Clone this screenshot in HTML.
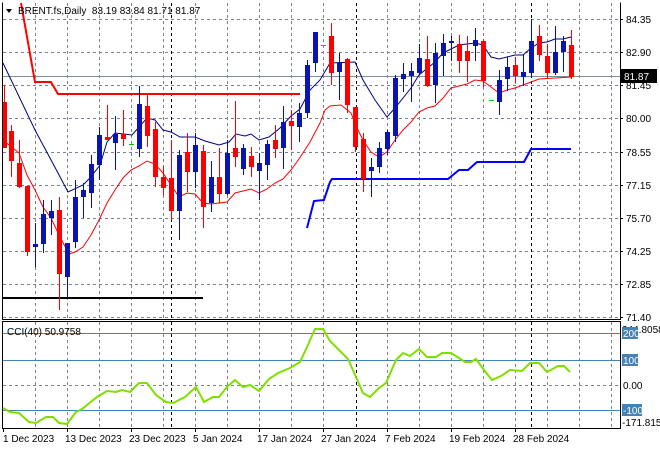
<!DOCTYPE html>
<html><head><meta charset="utf-8"><style>
html,body{margin:0;padding:0;background:#fff;}
svg{display:block;font-family:"Liberation Sans",sans-serif;}
</style></head><body>
<svg width="660" height="450" viewBox="0 0 660 450" xmlns="http://www.w3.org/2000/svg">
<rect width="660" height="450" fill="#fff"/>
<g stroke="#7a8290" stroke-width="1" stroke-dasharray="3,3" fill="none">
<path d="M3 19.5H620M3 52.5H620M3 85.5H620M3 118.5H620M3 152.5H620M3 185.5H620M3 218.5H620M3 251.5H620M3 284.5H620M3 317.5H620"/>
<path d="M35.5 3V319M67.5 3V319M99.5 3V319M131.5 3V319M163.5 3V319M195.5 3V319M227.5 3V319M259.5 3V319M291.5 3V319M323.5 3V319M387.5 3V319M419.5 3V319M451.5 3V319M483.5 3V319M515.5 3V319M547.5 3V319M579.5 3V319M611.5 3V319"/>
<path d="M35.5 322V428M67.5 322V428M99.5 322V428M131.5 322V428M163.5 322V428M195.5 322V428M227.5 322V428M259.5 322V428M291.5 322V428M323.5 322V428M387.5 322V428M419.5 322V428M451.5 322V428M483.5 322V428M515.5 322V428M547.5 322V428M579.5 322V428M611.5 322V428M3 385.5H620"/>
</g>
<g stroke="#000" stroke-width="1" stroke-dasharray="3,3">
<path d="M171.5 3V319M356.5 3V319M531.5 3V319M171.5 322V428M356.5 322V428M531.5 322V428"/>
</g>
<path d="M3 76.5H620" stroke="#7890a0" stroke-width="1"/>
<path d="M3 298H203" stroke="#000" stroke-width="2"/>
<polyline points="21,3 35,82 51,82 58,94 300,94" fill="none" stroke="#ff0000" stroke-width="2"/>
<polyline points="307,228 314,201 324,200 330,182 332,179 448,179 459,170 468,170 477,162 524,162 531,149 571,149" fill="none" stroke="#0000ff" stroke-width="2"/>
<polyline fill="none" stroke="#000080" stroke-width="1" points="3,63 35,130 58,173 68,192 83,185 90,178 100,165 107,142 115,133 132,135 147,118 155,120 163,130 171,132 180,137 195,137 205,141 219,145 229,142 236,134 245,136 251,134 259,140 269,137 280,128 291,116 300,109 310,90 320,80 330,63 355,62 363,80 375,100 387,117 395,108 411,88 419,75 435,62 443,53 459,45 475,43 483,45 491,57 499,59 515,55 523,55 531,48 539,43 547,42 555,39 563,39 571,37"/>
<polyline fill="none" stroke="#ff0000" stroke-width="1" points="3,140 19,153 27,175 35,190 43,207 51,218 59,235 69,254 75,252 83,247 91,235 99,220 107,203 115,190 123,178 131,170 139,166 147,161 155,164 163,173 171,185 179,197 187,193 195,194 203,203 211,204 227,202 235,193 243,191 251,189 259,193 267,189 275,183 283,179 291,170 299,159 310,142 320,123 325,110 330,106 341,105 351,113 357,128 363,140 371,152 379,157 387,152 395,140 403,130 411,122 419,112 427,108 435,106 443,98 451,88 459,86 467,84 475,80 483,81 491,87 499,93 507,90 515,88 523,85 531,82 539,79 555,78 571,77"/>
<path stroke="#ff0000" stroke-width="1" d="M4.5 85V148M11.5 125V177M19.5 140V188M27.5 186V256M59.5 197V310M107.5 105V140M123.5 110V146M147.5 95V147M155.5 122V187M163.5 166V195M171.5 140V220M187.5 133V192M203.5 145V228M219.5 148V203M235.5 101V167M251.5 147V177M275.5 125V158M291.5 110V150M331.5 23V85M347.5 58V113M355.5 107V152M363.5 133V192M427.5 36V87M459.5 35V73M467.5 36V82M483.5 39V87M515.5 57V83M539.5 25V61M547.5 44V79M571.5 30V79"/>
<g fill="#ff0000">
<rect x="2" y="102" width="5" height="46"/><rect x="9" y="131" width="5" height="30"/><rect x="17" y="163" width="5" height="24"/><rect x="25" y="186" width="5" height="66"/><rect x="57" y="210" width="5" height="64"/><rect x="105" y="137" width="5" height="3"/><rect x="121" y="134" width="5" height="5"/><rect x="145" y="106" width="5" height="30"/><rect x="153" y="129" width="5" height="48"/><rect x="161" y="177" width="5" height="11"/><rect x="169" y="178" width="5" height="33"/><rect x="185" y="152" width="5" height="20"/><rect x="201" y="151" width="5" height="56"/><rect x="217" y="177" width="5" height="17"/><rect x="233" y="148" width="5" height="9"/><rect x="249" y="156" width="5" height="11"/><rect x="273" y="140" width="5" height="9"/><rect x="289" y="121" width="5" height="5"/><rect x="329" y="36" width="5" height="37"/><rect x="345" y="59" width="5" height="46"/><rect x="353" y="107" width="5" height="40"/><rect x="361" y="139" width="5" height="40"/><rect x="425" y="59" width="5" height="27"/><rect x="457" y="44" width="5" height="17"/><rect x="465" y="51" width="5" height="10"/><rect x="481" y="41" width="5" height="40"/><rect x="513" y="65" width="5" height="11"/><rect x="537" y="36" width="5" height="19"/><rect x="545" y="56" width="5" height="17"/><rect x="569" y="45" width="5" height="32"/>
</g>
<path stroke="#0010c0" stroke-width="1" d="M35.5 223V267M43.5 200V253M51.5 200V235M67.5 243V298M75.5 180V248M83.5 183V218M91.5 155V208M99.5 127V180M115.5 116V170M139.5 86V157M179.5 150V240M195.5 133V188M211.5 161V212M227.5 140V195M243.5 144V175M259.5 153V200M267.5 140V180M283.5 106V169M299.5 103V142M307.5 60V118M315.5 32V72M339.5 53V100M371.5 158V197M379.5 142V173M387.5 130V155M395.5 75V142M403.5 63V92M411.5 63V102M419.5 44V75M435.5 43V103M443.5 34V76M451.5 36V61M475.5 28V61M499.5 70V115M507.5 57V91M523.5 54V86M531.5 19V77M555.5 26V75M563.5 36V72"/>
<g fill="#0a14b0">
<rect x="33" y="244" width="5" height="3"/><rect x="41" y="214" width="5" height="30"/><rect x="49" y="211" width="5" height="7"/><rect x="65" y="243" width="5" height="34"/><rect x="73" y="197" width="5" height="45"/><rect x="81" y="190" width="5" height="7"/><rect x="89" y="164" width="5" height="29"/><rect x="97" y="135" width="5" height="30"/><rect x="113" y="134" width="5" height="9"/><rect x="137" y="104" width="5" height="45"/><rect x="177" y="155" width="5" height="56"/><rect x="193" y="145" width="5" height="27"/><rect x="209" y="177" width="5" height="26"/><rect x="225" y="153" width="5" height="41"/><rect x="241" y="148" width="5" height="21"/><rect x="257" y="163" width="5" height="8"/><rect x="265" y="144" width="5" height="21"/><rect x="281" y="122" width="5" height="26"/><rect x="297" y="113" width="5" height="14"/><rect x="305" y="65" width="5" height="48"/><rect x="313" y="32" width="5" height="31"/><rect x="337" y="63" width="5" height="9"/><rect x="369" y="167" width="5" height="4"/><rect x="377" y="148" width="5" height="19"/><rect x="385" y="132" width="5" height="17"/><rect x="393" y="78" width="5" height="58"/><rect x="401" y="74" width="5" height="5"/><rect x="409" y="71" width="5" height="5"/><rect x="417" y="58" width="5" height="15"/><rect x="433" y="53" width="5" height="32"/><rect x="441" y="43" width="5" height="13"/><rect x="449" y="41" width="5" height="2"/><rect x="473" y="40" width="5" height="6"/><rect x="497" y="80" width="5" height="22"/><rect x="505" y="67" width="5" height="12"/><rect x="521" y="72" width="5" height="5"/><rect x="529" y="41" width="5" height="32"/><rect x="553" y="52" width="5" height="21"/><rect x="561" y="41" width="5" height="11"/>
</g>
<path stroke="#00cc00" stroke-width="1" d="M129 144.5H134M321 45.5H326M489 100.5H494"/>
<g fill="none" stroke="#000" stroke-width="1">
<path d="M2.5 2.5V319.5H620.5V2.5"/>
<path d="M2.5 321.5H620.5V428.5H2.5Z"/>
</g>
<path d="M6 9L12 9L9 13Z" fill="#000"/>
<text x="18" y="14" font-size="10" fill="#000">BRENT.fs,Daily&#160;&#160;83.19&#160;83.84&#160;81.71&#160;81.87</text>
<g font-size="10" fill="#000">
<text x="626" y="23">84.35</text><text x="626" y="56">82.90</text><text x="626" y="89">81.45</text><text x="626" y="122">80.00</text><text x="626" y="156">78.55</text><text x="626" y="189">77.15</text><text x="626" y="222">75.70</text><text x="626" y="255">74.25</text><text x="626" y="288">72.85</text><text x="626" y="321">71.40</text>
</g>
<path d="M620 19.5h3M620 52.5h3M620 85.5h3M620 118.5h3M620 152.5h3M620 185.5h3M620 218.5h3M620 251.5h3M620 284.5h3M620 317.5h3" stroke="#000"/>
<rect x="621" y="69" width="36" height="14" fill="#000"/>
<text x="624" y="80" font-size="10" fill="#fff">81.87</text>
<path d="M3 333.5H620M3 360.5H620M3 410.5H620" stroke="#4682b4" stroke-width="1"/>
<polyline fill="none" stroke="#7fe000" stroke-width="2" points="3,408 10,412 19,413 29,422 36,423 46,417 53,417 59,423 67,424 76,412 82,409 97,397 107,391 116,392 122,390 130,392 139,383 147,383 156,395 166,402 173,403 185,397 196,387 204,402 213,397 219,397 227,387 235,380 243,387 250,385 259,391 269,379 278,373 290,368 300,362 307,347 315,329 323,329 330,341 341,352 348,359 356,377 363,393 370,397 379,388 386,383 396,360 403,353 410,356 419,349 427,357 436,357 442,353 451,353 459,358 465,362 471,362 476,359 484,370 492,380 501,376 510,370 522,371 530,363 539,363 547,372 558,366 564,366 570,372"/>
<text x="7" y="335" font-size="10" fill="#000">CCI(40) 50.9758</text>
<g font-size="10">
<text x="622" y="333" fill="#000">244.8058</text>
<rect x="622" y="327" width="16" height="12" fill="#4682b4"/><text x="623" y="337" fill="#fff">200</text>
<rect x="622" y="354" width="16" height="12" fill="#4682b4"/><text x="623" y="364" fill="#fff">100</text>
<text x="623" y="389" fill="#000">0.00</text>
<rect x="622" y="404" width="20" height="12" fill="#4682b4"/><text x="623" y="414" fill="#fff">-100</text>
<text x="622" y="426" fill="#000">-171.815</text>
</g>
<path d="M3.5 428V432M67.5 428V432M131.5 428V432M195.5 428V432M259.5 428V432M323.5 428V432M387.5 428V432M451.5 428V432M515.5 428V432" stroke="#000"/>
<g font-size="10" fill="#000">
<text x="3" y="442">1 Dec 2023</text><text x="65" y="442">13 Dec 2023</text><text x="129" y="442">23 Dec 2023</text><text x="193" y="442">5 Jan 2024</text><text x="257" y="442">17 Jan 2024</text><text x="321" y="442">27 Jan 2024</text><text x="385" y="442">7 Feb 2024</text><text x="449" y="442">19 Feb 2024</text><text x="513" y="442">28 Feb 2024</text>
</g>
</svg>
</body></html>
